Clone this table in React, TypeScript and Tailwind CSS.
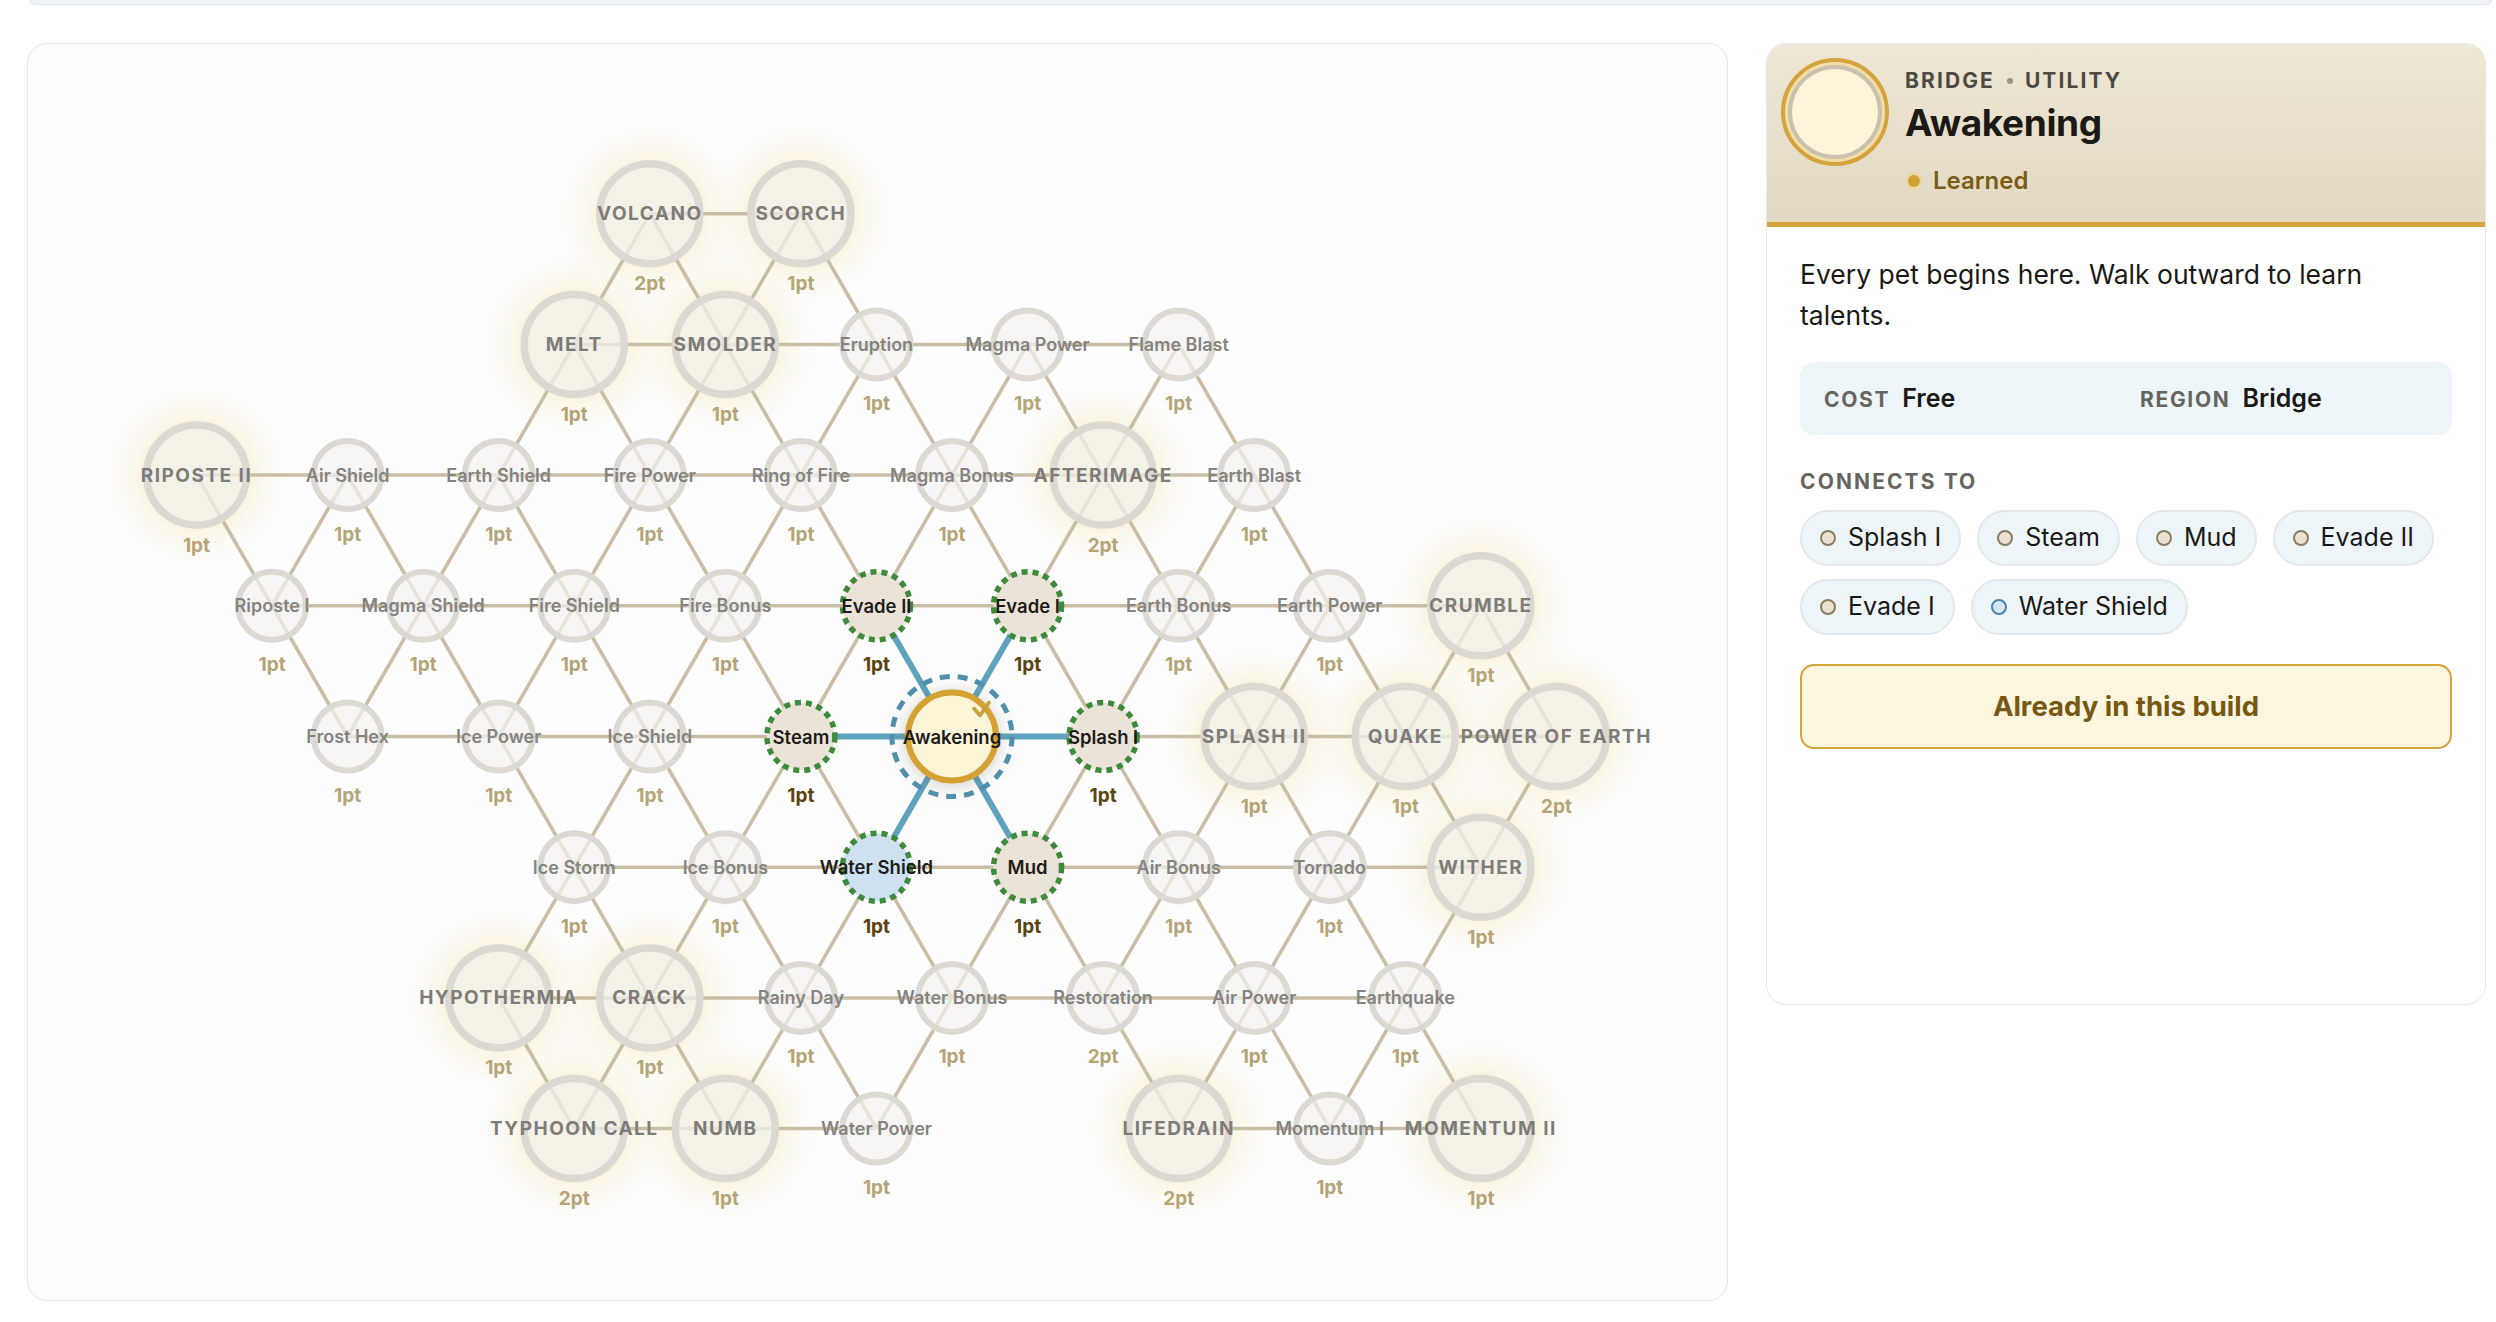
import React from 'react';

type Kind = 'small' | 'big' | 'avail' | 'start';

interface TalentNode {
  id: string;
  label: string;
  c: number;
  r: number;
  kind: Kind;
  cost?: string;
  water?: boolean;
}

const S = 75.55;
const H = 130.7;
const CX = 924;
const CY = 692.5;

const nodes: TalentNode[] = [
  { id: 'volcano', label: 'VOLCANO', c: -4, r: -4, kind: 'big', cost: '2pt' },
  { id: 'scorch', label: 'SCORCH', c: -2, r: -4, kind: 'big', cost: '1pt' },

  { id: 'melt', label: 'MELT', c: -5, r: -3, kind: 'big', cost: '1pt' },
  { id: 'smolder', label: 'SMOLDER', c: -3, r: -3, kind: 'big', cost: '1pt' },
  { id: 'eruption', label: 'Eruption', c: -1, r: -3, kind: 'small', cost: '1pt' },
  { id: 'magmapower', label: 'Magma Power', c: 1, r: -3, kind: 'small', cost: '1pt' },
  { id: 'flameblast', label: 'Flame Blast', c: 3, r: -3, kind: 'small', cost: '1pt' },

  { id: 'riposte2', label: 'RIPOSTE II', c: -10, r: -2, kind: 'big', cost: '1pt' },
  { id: 'airshield', label: 'Air Shield', c: -8, r: -2, kind: 'small', cost: '1pt' },
  { id: 'earthshield', label: 'Earth Shield', c: -6, r: -2, kind: 'small', cost: '1pt' },
  { id: 'firepower', label: 'Fire Power', c: -4, r: -2, kind: 'small', cost: '1pt' },
  { id: 'ringoffire', label: 'Ring of Fire', c: -2, r: -2, kind: 'small', cost: '1pt' },
  { id: 'magmabonus', label: 'Magma Bonus', c: 0, r: -2, kind: 'small', cost: '1pt' },
  { id: 'afterimage', label: 'AFTERIMAGE', c: 2, r: -2, kind: 'big', cost: '2pt' },
  { id: 'earthblast', label: 'Earth Blast', c: 4, r: -2, kind: 'small', cost: '1pt' },

  { id: 'riposte1', label: 'Riposte I', c: -9, r: -1, kind: 'small', cost: '1pt' },
  { id: 'magmashield', label: 'Magma Shield', c: -7, r: -1, kind: 'small', cost: '1pt' },
  { id: 'fireshield', label: 'Fire Shield', c: -5, r: -1, kind: 'small', cost: '1pt' },
  { id: 'firebonus', label: 'Fire Bonus', c: -3, r: -1, kind: 'small', cost: '1pt' },
  { id: 'evade2', label: 'Evade II', c: -1, r: -1, kind: 'avail', cost: '1pt' },
  { id: 'evade1', label: 'Evade I', c: 1, r: -1, kind: 'avail', cost: '1pt' },
  { id: 'earthbonus', label: 'Earth Bonus', c: 3, r: -1, kind: 'small', cost: '1pt' },
  { id: 'earthpower', label: 'Earth Power', c: 5, r: -1, kind: 'small', cost: '1pt' },
  { id: 'crumble', label: 'CRUMBLE', c: 7, r: -1, kind: 'big', cost: '1pt' },

  { id: 'frosthex', label: 'Frost Hex', c: -8, r: 0, kind: 'small', cost: '1pt' },
  { id: 'icepower', label: 'Ice Power', c: -6, r: 0, kind: 'small', cost: '1pt' },
  { id: 'iceshield', label: 'Ice Shield', c: -4, r: 0, kind: 'small', cost: '1pt' },
  { id: 'steam', label: 'Steam', c: -2, r: 0, kind: 'avail', cost: '1pt' },
  { id: 'awakening', label: 'Awakening', c: 0, r: 0, kind: 'start' },
  { id: 'splash1', label: 'Splash I', c: 2, r: 0, kind: 'avail', cost: '1pt' },
  { id: 'splash2', label: 'SPLASH II', c: 4, r: 0, kind: 'big', cost: '1pt' },
  { id: 'quake', label: 'QUAKE', c: 6, r: 0, kind: 'big', cost: '1pt' },
  { id: 'powerofearth', label: 'POWER OF EARTH', c: 8, r: 0, kind: 'big', cost: '2pt' },

  { id: 'icestorm', label: 'Ice Storm', c: -5, r: 1, kind: 'small', cost: '1pt' },
  { id: 'icebonus', label: 'Ice Bonus', c: -3, r: 1, kind: 'small', cost: '1pt' },
  { id: 'watershield', label: 'Water Shield', c: -1, r: 1, kind: 'avail', cost: '1pt', water: true },
  { id: 'mud', label: 'Mud', c: 1, r: 1, kind: 'avail', cost: '1pt' },
  { id: 'airbonus', label: 'Air Bonus', c: 3, r: 1, kind: 'small', cost: '1pt' },
  { id: 'tornado', label: 'Tornado', c: 5, r: 1, kind: 'small', cost: '1pt' },
  { id: 'wither', label: 'WITHER', c: 7, r: 1, kind: 'big', cost: '1pt' },

  { id: 'hypothermia', label: 'HYPOTHERMIA', c: -6, r: 2, kind: 'big', cost: '1pt' },
  { id: 'crack', label: 'CRACK', c: -4, r: 2, kind: 'big', cost: '1pt' },
  { id: 'rainyday', label: 'Rainy Day', c: -2, r: 2, kind: 'small', cost: '1pt' },
  { id: 'waterbonus', label: 'Water Bonus', c: 0, r: 2, kind: 'small', cost: '1pt' },
  { id: 'restoration', label: 'Restoration', c: 2, r: 2, kind: 'small', cost: '2pt' },
  { id: 'airpower', label: 'Air Power', c: 4, r: 2, kind: 'small', cost: '1pt' },
  { id: 'earthquake', label: 'Earthquake', c: 6, r: 2, kind: 'small', cost: '1pt' },

  { id: 'typhooncall', label: 'TYPHOON CALL', c: -5, r: 3, kind: 'big', cost: '2pt' },
  { id: 'numb', label: 'NUMB', c: -3, r: 3, kind: 'big', cost: '1pt' },
  { id: 'waterpower', label: 'Water Power', c: -1, r: 3, kind: 'small', cost: '1pt' },
  { id: 'lifedrain', label: 'LIFEDRAIN', c: 3, r: 3, kind: 'big', cost: '2pt' },
  { id: 'momentum1', label: 'Momentum I', c: 5, r: 3, kind: 'small', cost: '1pt' },
  { id: 'momentum2', label: 'MOMENTUM II', c: 7, r: 3, kind: 'big', cost: '1pt' },
];

const pos = (n: TalentNode) => ({ x: CX + n.c * S, y: CY + n.r * H });

// neighbours on the triangular lattice
const edges: [TalentNode, TalentNode][] = [];
nodes.forEach(a => {
  nodes.forEach(b => {
    const dc = b.c - a.c;
    const dr = b.r - a.r;
    if ((dc === 2 && dr === 0) || (dc === 1 && dr === 1) || (dc === -1 && dr === 1)) edges.push([a, b]);
  });
});

const FONT = 'Inter, sans-serif';

const TalentGraph: React.FC = () => (
  <svg width={1699} height={1256} viewBox="0 0 1699 1256" className="block">
    <defs>
      <radialGradient id="glow" cx="50%" cy="50%" r="50%">
        <stop offset="0.45" stopColor="#f3e2a8" stopOpacity="0.5" />
        <stop offset="0.7" stopColor="#f6ebc6" stopOpacity="0.22" />
        <stop offset="1" stopColor="#fbf6e6" stopOpacity="0" />
      </radialGradient>
      <filter id="startShadow" x="-50%" y="-50%" width="200%" height="200%">
        <feDropShadow dx="0" dy="2" stdDeviation="9" floodColor="#5b5040" floodOpacity="0.28" />
      </filter>
    </defs>

    {nodes.filter(n => n.kind === 'big').map(n => {
      const p = pos(n);
      return <circle key={'g' + n.id} cx={p.x} cy={p.y} r={98} fill="url(#glow)" />;
    })}

    {edges.map(([a, b]) => {
      const pa = pos(a);
      const pb = pos(b);
      const active = a.kind === 'start' || b.kind === 'start';
      return (
        <line
          key={a.id + b.id}
          x1={pa.x}
          y1={pa.y}
          x2={pb.x}
          y2={pb.y}
          stroke={active ? '#5fa2be' : '#c9bea4'}
          strokeWidth={active ? 6 : 3.5}
        />
      );
    })}

    {nodes.map(n => {
      const p = pos(n);
      if (n.kind === 'start') {
        return (
          <g key={n.id}>
            <circle cx={p.x} cy={p.y} r={60} fill="none" stroke="#4f91b0" strokeWidth={5} strokeDasharray="10 8" />
            <circle cx={p.x} cy={p.y} r={44} fill="#fcf4d7" stroke="#d4a233" strokeWidth={6} filter="url(#startShadow)" />
            <path
              d={`M ${p.x + 22} ${p.y - 28} L ${p.x + 28} ${p.y - 21} L ${p.x + 37} ${p.y - 34}`}
              fill="none"
              stroke="#c99f38"
              strokeWidth={3.5}
              strokeLinecap="round"
              strokeLinejoin="round"
            />
            <text x={p.x} y={p.y} textAnchor="middle" dominantBaseline="central" fontFamily={FONT} fontWeight={600} fontSize={18.5} fill="#1d1b18">
              {n.label}
            </text>
          </g>
        );
      }
      if (n.kind === 'avail') {
        return (
          <g key={n.id}>
            <circle cx={p.x} cy={p.y} r={34} fill={n.water ? '#cde1f1' : '#ebe3d7'} stroke="#3c8a3a" strokeWidth={5.5} strokeDasharray="6 5" />
            <text x={p.x} y={p.y} textAnchor="middle" dominantBaseline="central" fontFamily={FONT} fontWeight={600} fontSize={18.5} fill="#1d1b18">
              {n.label}
            </text>
            <text x={p.x} y={p.y + 59} textAnchor="middle" dominantBaseline="central" fontFamily={FONT} fontWeight={700} fontSize={19} fill="#5a430e">
              {n.cost}
            </text>
          </g>
        );
      }
      const big = n.kind === 'big';
      return (
        <g key={n.id}>
          <circle
            cx={p.x}
            cy={p.y}
            r={big ? 50 : 34}
            fill="#f2f1ef"
            fillOpacity={0.72}
            stroke="#dcd9d3"
            strokeWidth={big ? 7.5 : 6}
          />
          <text
            x={p.x}
            y={p.y}
            textAnchor="middle"
            dominantBaseline="central"
            fontFamily={FONT}
            fontWeight={big ? 700 : 600}
            fontSize={big ? 19 : 18}
            letterSpacing={big ? 1.5 : 0}
            fill={big ? '#7e7c79' : '#85837f'}
          >
            {n.label}
          </text>
          <text
            x={p.x}
            y={p.y + (big ? 70 : 59)}
            textAnchor="middle"
            dominantBaseline="central"
            fontFamily={FONT}
            fontWeight={700}
            fontSize={19}
            fill="#b4a476"
          >
            {n.cost}
          </text>
        </g>
      );
    })}
  </svg>
);

const connects = [
  { name: 'Splash I' },
  { name: 'Steam' },
  { name: 'Mud' },
  { name: 'Evade II' },
  { name: 'Evade I' },
  { name: 'Water Shield', water: true },
];

const DetailPanel: React.FC = () => (
  <div className="w-[720px] h-[962px] shrink-0 rounded-[20px] border border-[#e2e8ee] bg-white overflow-hidden">
    <div className="h-[183px] border-b-[5px] border-[#d4a33d] bg-gradient-to-b from-[#eee7d5] to-[#e2d9c3] flex items-start pl-[14px] pt-[14px] gap-[16px]">
      <div className="w-[108px] h-[108px] rounded-full border-[4px] border-[#d4a33d] bg-[#f1dfa8] p-[3px] shrink-0">
        <div className="w-full h-full rounded-full border-[4px] border-[#c9c0ae] bg-[#fdf5d9]" />
      </div>
      <div className="flex flex-col pt-[7px]">
        <div className="flex items-center gap-[12px] text-[21px] leading-[32px] font-bold tracking-[0.1em] text-[#4d4942]">
          <span>BRIDGE</span>
          <span className="w-[6px] h-[6px] rounded-full bg-[#9a938a]" />
          <span>UTILITY</span>
        </div>
        <div className="mt-[3px] text-[37px] leading-[46px] font-bold text-[#1b1916] tracking-[-0.01em]">Awakening</div>
        <div className="mt-[19px] flex items-center gap-[10px]">
          <span className="w-[18px] h-[18px] rounded-full bg-[#ead9a6] flex items-center justify-center">
            <span className="w-[12px] h-[12px] rounded-full bg-[#d2a136]" />
          </span>
          <span className="text-[24px] leading-[32px] font-semibold text-[#7b5c14]">Learned</span>
        </div>
      </div>
    </div>

    <div className="px-[33px] pt-[27px]">
      <p className="text-[26.5px] leading-[41px] text-[#1b1916]">Every pet begins here. Walk outward to learn talents.</p>

      <div className="mt-[26px] h-[73px] rounded-[14px] bg-[#eef5f9] grid grid-cols-[316px_1fr] items-center px-[24px]">
        <div className="flex items-baseline gap-[12px]">
          <span className="text-[21px] font-bold tracking-[0.08em] text-[#66645f]">COST</span>
          <span className="text-[25px] font-semibold text-[#1b1916]">Free</span>
        </div>
        <div className="flex items-baseline gap-[12px]">
          <span className="text-[21px] font-bold tracking-[0.08em] text-[#66645f]">REGION</span>
          <span className="text-[25px] font-semibold text-[#1b1916]">Bridge</span>
        </div>
      </div>

      <div className="mt-[33px] text-[21px] leading-[28px] font-bold tracking-[0.1em] text-[#66645f]">CONNECTS TO</div>

      <div className="mt-[14px] flex flex-wrap gap-x-[16px] gap-y-[13px] w-[650px]">
        {connects.map(c => (
          <div
            key={c.name}
            className="h-[56px] rounded-full bg-[#eef5f9] border-2 border-[#e1e8ee] flex items-center pl-[18px] pr-[18px] gap-[12px]"
          >
            <span
              className={`w-[16px] h-[16px] rounded-full border-[2.5px] ${c.water ? 'border-[#4a85b0] bg-[#d6e7f3]' : 'border-[#8a7c5e] bg-[#e9e1d2]'}`}
            />
            <span className="text-[25px] text-[#1b1916]">{c.name}</span>
          </div>
        ))}
      </div>

      <div className="mt-[29px] h-[85px] rounded-[14px] border-2 border-[#d3a43a] bg-[#fdf6df] flex items-center justify-center">
        <span className="text-[27.5px] font-bold text-[#765812]">Already in this build</span>
      </div>
    </div>
  </div>
);

export default function App() {
  return (
    <div className="min-h-screen bg-white font-[Inter,sans-serif]">
      <div className="ml-[30px] w-[2462px] h-[5px] rounded-b-[18px] border-x border-b border-[#dfe6ec] bg-[#eef4f8]" />
      <div className="flex gap-[38px] pl-[27px] mt-[38px]">
        <div className="w-[1701px] h-[1258px] shrink-0 rounded-[20px] border border-[#e2e8ee] bg-[#fdfdfd] overflow-hidden">
          <TalentGraph />
        </div>
        <DetailPanel />
      </div>
    </div>
  );
}
